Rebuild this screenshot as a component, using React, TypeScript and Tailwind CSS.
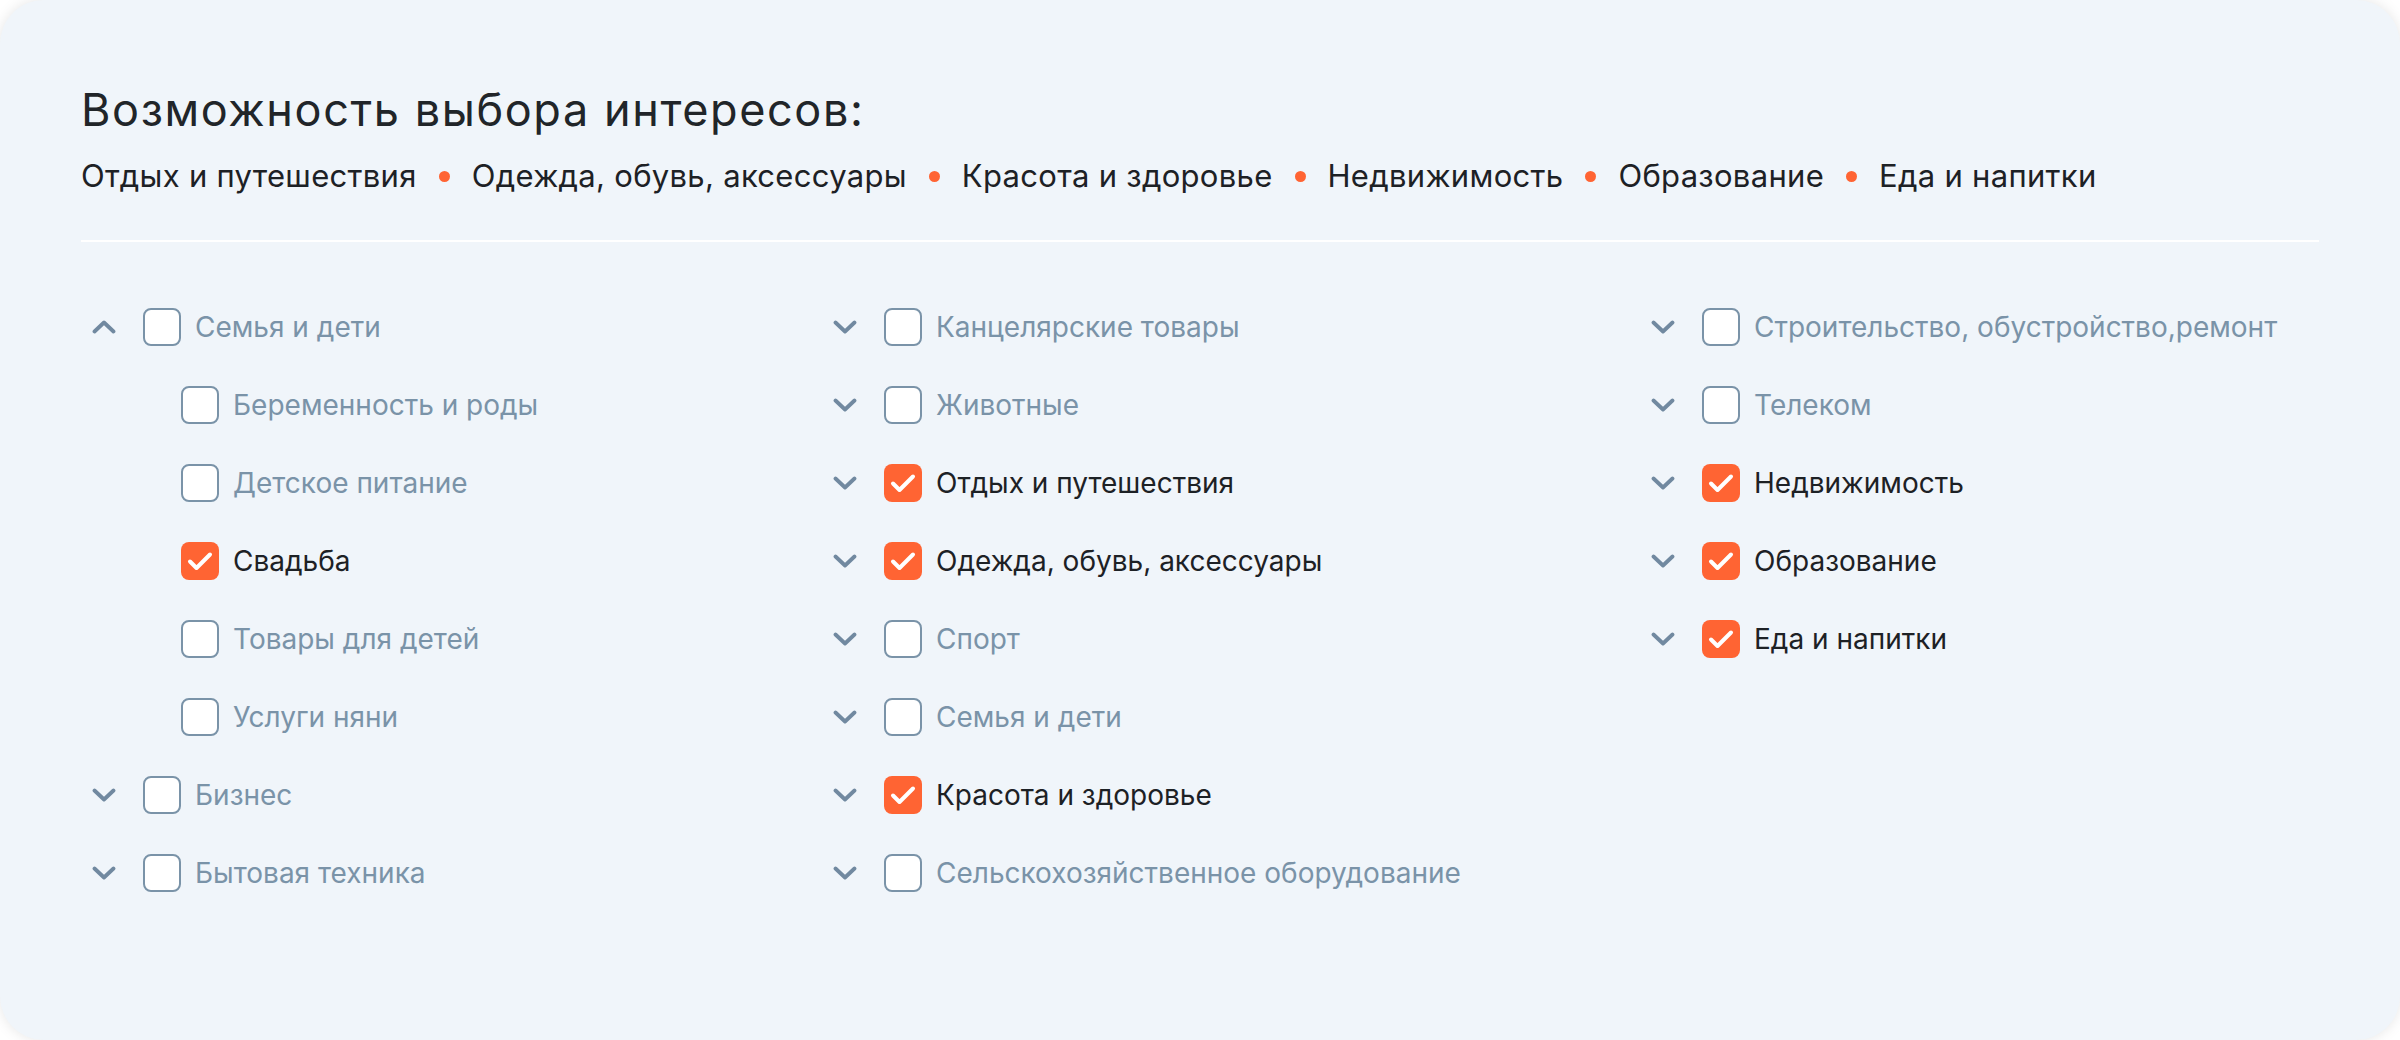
import React from "react";

type Item = { label: string; checked?: boolean; chevron?: "up" | "down" | "none"; child?: boolean };

const col1: Item[] = [
  { label: "Семья и дети", chevron: "up" },
  { label: "Беременность и роды", child: true, chevron: "none" },
  { label: "Детское питание", child: true, chevron: "none" },
  { label: "Свадьба", child: true, checked: true, chevron: "none" },
  { label: "Товары для детей", child: true, chevron: "none" },
  { label: "Услуги няни", child: true, chevron: "none" },
  { label: "Бизнес", chevron: "down" },
  { label: "Бытовая техника", chevron: "down" },
];

const col2: Item[] = [
  { label: "Канцелярские товары", chevron: "down" },
  { label: "Животные", chevron: "down" },
  { label: "Отдых и путешествия", chevron: "down", checked: true },
  { label: "Одежда, обувь, аксессуары", chevron: "down", checked: true },
  { label: "Спорт", chevron: "down" },
  { label: "Семья и дети", chevron: "down" },
  { label: "Красота и здоровье", chevron: "down", checked: true },
  { label: "Сельскохозяйственное оборудование", chevron: "down" },
];

const col3: Item[] = [
  { label: "Строительство, обустройство,ремонт", chevron: "down" },
  { label: "Телеком", chevron: "down" },
  { label: "Недвижимость", chevron: "down", checked: true },
  { label: "Образование", chevron: "down", checked: true },
  { label: "Еда и напитки", chevron: "down", checked: true },
];

const tags = [
  "Отдых и путешествия",
  "Одежда, обувь, аксессуары",
  "Красота и здоровье",
  "Недвижимость",
  "Образование",
  "Еда и напитки",
];

function Chevron({ dir }: { dir: "up" | "down" }) {
  return (
    <svg width="24" height="14" viewBox="0 0 24 14" className="shrink-0">
      <path
        d={dir === "down" ? "M2.5 2.5 L12 11.5 L21.5 2.5" : "M2.5 11.5 L12 2.5 L21.5 11.5"}
        fill="none"
        stroke="#7189a0"
        strokeWidth="3.8"
        strokeLinecap="round"
        strokeLinejoin="round"
      />
    </svg>
  );
}

function Box({ checked }: { checked?: boolean }) {
  if (checked) {
    return (
      <div className="w-[38px] h-[38px] rounded-[8px] bg-[#ff6433] flex items-center justify-center shrink-0">
        <svg width="38" height="38" viewBox="0 0 38 38">
          <path d="M9 19.5 L15.5 26 L29 12.5" fill="none" stroke="#ffffff" strokeWidth="4" strokeLinecap="round" strokeLinejoin="round" />
        </svg>
      </div>
    );
  }
  return <div className="w-[38px] h-[38px] rounded-[8px] border-2 border-[#7a93a8] bg-white shrink-0" />;
}

function Row({ item }: { item: Item }) {
  return (
    <div className="h-[78px] flex items-center">
      {item.child ? (
        <div className="w-[89px] shrink-0" />
      ) : (
        <div className="w-[51px] shrink-0 flex items-center">
          {item.chevron !== "none" && <Chevron dir={item.chevron === "up" ? "up" : "down"} />}
        </div>
      )}
      <Box checked={item.checked} />
      <span
        className={
          "ml-[14px] text-[28px] leading-[36px] whitespace-nowrap " +
          (item.checked ? "text-[#1d2125]" : "text-[#7a93a8]")
        }
      >
        {item.label}
      </span>
    </div>
  );
}

export default function App() {
  return (
    <div className="w-[2400px] h-[1040px] bg-white" style={{ fontFamily: "Inter, 'Noto Sans', sans-serif" }}>
      <div className="w-full h-full rounded-[44px] bg-[#f0f5fa] shadow-[0_0_14px_rgba(0,0,0,0.10)] pl-[81px] pr-[81px] pt-[83px]">
        <h1 className="text-[45px] leading-[54px] tracking-[1.6px] text-[#212529] font-normal">Возможность выбора интересов:</h1>
        <div className="mt-[20px] flex items-center h-[38px]">
          {tags.map((t, i) => (
            <React.Fragment key={t}>
              {i > 0 && <span className="mx-[22px] w-[11px] h-[11px] rounded-full bg-[#ff6433] shrink-0" />}
              <span className="text-[31px] leading-[38px] tracking-[0.3px] text-[#1d2125] whitespace-nowrap">{t}</span>
            </React.Fragment>
          ))}
        </div>
        <div className="mt-[45px] h-[2px] bg-white" />
        <div className="mt-[46px] flex">
          <div className="w-[752px] pl-[11px] flex flex-col">
            {col1.map((it, i) => (
              <Row key={i} item={it} />
            ))}
          </div>
          <div className="w-[818px] flex flex-col">
            {col2.map((it, i) => (
              <Row key={i} item={it} />
            ))}
          </div>
          <div className="flex-1 flex flex-col">
            {col3.map((it, i) => (
              <Row key={i} item={it} />
            ))}
          </div>
        </div>
      </div>
    </div>
  );
}
